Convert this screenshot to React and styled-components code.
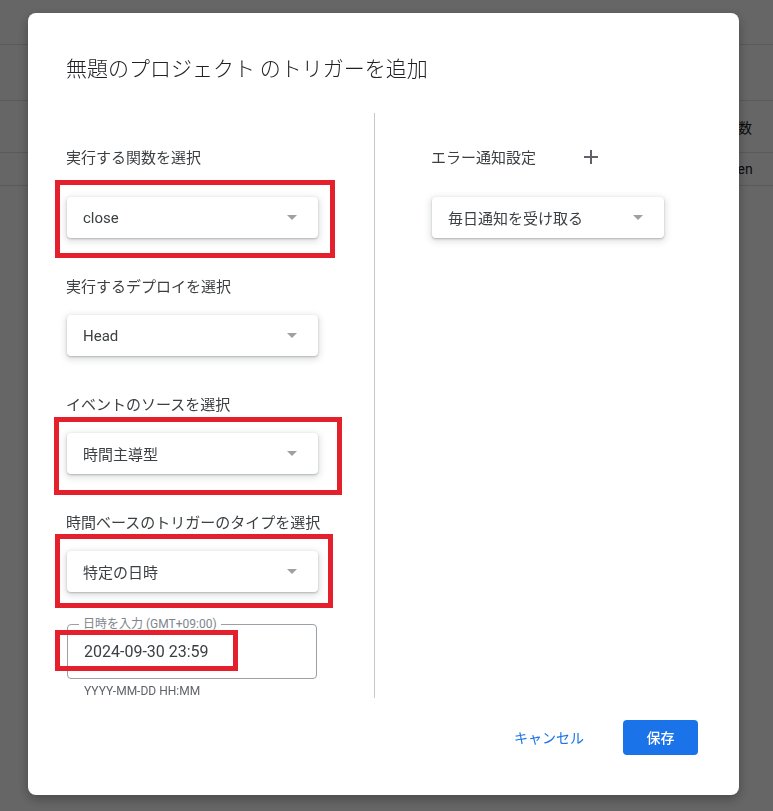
import styled, { createGlobalStyle } from "styled-components";

const GlobalStyle = createGlobalStyle`
  * {
    box-sizing: border-box;
  }
  body {
    margin: 0;
    font-family: Roboto, "Noto Sans CJK JP", sans-serif;
    color: #202124;
    background: #fff;
  }
`;

const Page = styled.div`
  min-height: 100vh;
  background: #fff;
`;

const TopBar = styled.div`
  height: 45px;
  border-bottom: 1px solid #e0e0e0;
`;

const Toolbar = styled.div`
  height: 56px;
  border-bottom: 1px solid #e0e0e0;
`;

const TableRow = styled.div`
  display: flex;
  align-items: center;
  height: ${(p) => p.$height}px;
  border-bottom: 1px solid #e0e0e0;
  padding-left: ${(p) => p.$indent}px;
  font-size: 14px;
  color: #202124;
  white-space: nowrap;
`;

const Backdrop = styled.div`
  position: fixed;
  inset: 0;
  background: rgba(0, 0, 0, 0.6);
  padding: 13px 0 0 28px;
`;

const Dialog = styled.div`
  width: 711px;
  background: #fff;
  border-radius: 8px;
  box-shadow: 0 4px 12px rgba(0, 0, 0, 0.3);
  padding-bottom: 40px;
`;

const Title = styled.h2`
  margin: 0;
  padding: 40px 38px 0;
  font-family: "Noto Sans CJK JP", sans-serif;
  font-size: 21px;
  line-height: 28px;
  font-weight: 300;
  color: #202124;
`;

const Body = styled.div`
  display: flex;
  margin-top: 32px;
`;

const LeftColumn = styled.div`
  width: 309px;
  margin-left: 38px;
  padding-top: 34px;
  border-right: 1px solid #c8c8c8;
`;

const RightColumn = styled.div`
  padding-top: 34px;
  padding-left: 56px;
`;

const Field = styled.div`
  margin-bottom: ${(p) => p.$after}px;
`;

const LabelRow = styled.div`
  display: flex;
  align-items: center;
  height: 20px;
  margin-bottom: ${(p) => p.$gap}px;
`;

const Label = styled.div`
  font-family: "Noto Sans CJK JP", sans-serif;
  font-size: 15px;
  line-height: 20px;
  color: #3c4043;
`;

const AddButton = styled.button`
  display: flex;
  align-items: center;
  justify-content: center;
  width: 20px;
  height: 20px;
  margin-left: 45px;
  padding: 0;
  border: none;
  background: none;
  color: #5f6368;
`;

const Control = styled.div`
  position: relative;
  width: ${(p) => p.$width}px;
  margin-left: 1px;
`;

const SelectBox = styled.div`
  display: flex;
  align-items: center;
  justify-content: space-between;
  height: 41px;
  padding: 0 21px 0 16px;
  background: #fff;
  border-radius: 4px;
  box-shadow: 0 1px 2px rgba(60, 64, 67, 0.3), 0 2px 6px 2px rgba(60, 64, 67, 0.15);
  font-family: Roboto, "Noto Sans CJK JP", sans-serif;
  font-size: 15px;
  color: #3c4043;
`;

const Arrow = styled.span`
  width: 0;
  height: 0;
  border-left: 5px solid transparent;
  border-right: 5px solid transparent;
  border-top: 5px solid #a0a0a0;
`;

const Highlight = styled.div`
  position: absolute;
  left: ${(p) => p.$left}px;
  top: ${(p) => p.$top}px;
  width: ${(p) => p.$width}px;
  height: ${(p) => p.$height}px;
  border: 5px solid #e3202b;
  pointer-events: none;
`;

const DateBox = styled.div`
  position: relative;
  width: 250px;
  height: 55px;
  margin-left: 1px;
  border: 1px solid #9aa0a6;
  border-radius: 4px;
  padding: 17px 0 0 16px;
`;

const Legend = styled.span`
  position: absolute;
  top: -8px;
  left: 11px;
  padding: 0 4px;
  background: #fff;
  font-family: Roboto, "Noto Sans CJK JP", sans-serif;
  font-size: 12px;
  line-height: 14px;
  color: #80868b;
  white-space: nowrap;
`;

const DateValue = styled.div`
  font-size: 16px;
  line-height: 20px;
  color: #3c4043;
`;

const Helper = styled.div`
  margin: 5px 0 0 18px;
  font-size: 12px;
  line-height: 14px;
  color: #5f6368;
`;

const Footer = styled.div`
  display: flex;
  justify-content: flex-end;
  align-items: center;
  margin-top: 21px;
  padding-right: 41px;
`;

const TextButton = styled.button`
  margin-right: 23px;
  padding: 8px 16px;
  border: none;
  background: none;
  font-family: "Noto Sans CJK JP", sans-serif;
  font-size: 14px;
  line-height: 20px;
  color: #1a73e8;
`;

const PrimaryButton = styled.button`
  width: 75px;
  height: 35px;
  border: none;
  border-radius: 4px;
  background: #1a73e8;
  font-family: "Noto Sans CJK JP", sans-serif;
  font-size: 14px;
  font-weight: 500;
  color: #fff;
`;

const Select = ({ value, width = 251, highlight }) => (
  <Control $width={width}>
    <SelectBox>
      <span>{value}</span>
      <Arrow />
    </SelectBox>
    {highlight && (
      <Highlight
        $left={highlight[0]}
        $top={highlight[1]}
        $width={highlight[2]}
        $height={highlight[3]}
      />
    )}
  </Control>
);

export default function App() {
  return (
    <>
      <GlobalStyle />
      <Page>
        <TopBar />
        <Toolbar />
        <TableRow $height={52} $indent={710}>実行数</TableRow>
        <TableRow $height={33} $indent={720}>Open</TableRow>
      </Page>
      <Backdrop>
        <Dialog>
          <Title>無題のプロジェクト のトリガーを追加</Title>
          <Body>
            <LeftColumn>
              <Field $after={38}>
                <LabelRow $gap={30}>
                  <Label>実行する関数を選択</Label>
                </LabelRow>
                <Select value="close" highlight={[-12, -17, 280, 78]} />
              </Field>
              <Field $after={38}>
                <LabelRow $gap={19}>
                  <Label>実行するデプロイを選択</Label>
                </LabelRow>
                <Select value="Head" />
              </Field>
              <Field $after={38}>
                <LabelRow $gap={19}>
                  <Label>イベントのソースを選択</Label>
                </LabelRow>
                <Select value="時間主導型" highlight={[-13, -16, 288, 78]} />
              </Field>
              <Field $after={32}>
                <LabelRow $gap={19}>
                  <Label>時間ベースのトリガーのタイプを選択</Label>
                </LabelRow>
                <Select value="特定の日時" highlight={[-12, -17, 278, 74]} />
              </Field>
              <DateBox>
                <Legend>日時を入力 (GMT+09:00)</Legend>
                <DateValue>2024-09-30 23:59</DateValue>
                <Highlight $left={-13} $top={5} $width={183} $height={41} />
              </DateBox>
              <Helper>YYYY-MM-DD HH:MM</Helper>
            </LeftColumn>
            <RightColumn>
              <Field $after={0}>
                <LabelRow $gap={30}>
                  <Label>エラー通知設定</Label>
                  <AddButton aria-label="追加">
                    <svg width="14" height="14" viewBox="0 0 14 14">
                      <path d="M7 0v14M0 7h14" stroke="currentColor" strokeWidth="2" />
                    </svg>
                  </AddButton>
                </LabelRow>
                <Select value="毎日通知を受け取る" width={232} />
              </Field>
            </RightColumn>
          </Body>
          <Footer>
            <TextButton>キャンセル</TextButton>
            <PrimaryButton>保存</PrimaryButton>
          </Footer>
        </Dialog>
      </Backdrop>
    </>
  );
}
